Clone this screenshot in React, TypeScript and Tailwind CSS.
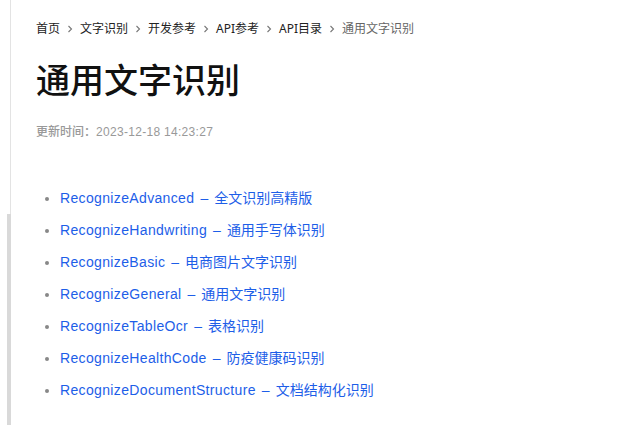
const crumbs = ['首页', '文字识别', '开发参考', 'API参考', 'API目录'];

const items = [
  ['RecognizeAdvanced', '全文识别高精版'],
  ['RecognizeHandwriting', '通用手写体识别'],
  ['RecognizeBasic', '电商图片文字识别'],
  ['RecognizeGeneral', '通用文字识别'],
  ['RecognizeTableOcr', '表格识别'],
  ['RecognizeHealthCode', '防疫健康码识别'],
  ['RecognizeDocumentStructure', '文档结构化识别'],
];

function Chevron() {
  return (
    <svg width="12" height="12" viewBox="0 0 12 12" className="mx-[4px] text-[#777]">
      <path d="M4.5 3 L7.5 6 L4.5 9" fill="none" stroke="currentColor" strokeWidth="1.1" />
    </svg>
  );
}

export default function App() {
  return (
    <div
      className="w-[619px] h-[425px] bg-white flex overflow-hidden"
      style={{ fontFamily: '"Liberation Sans", "Noto Sans CJK SC", sans-serif' }}
    >
      {/* left rail */}
      <div className="w-[11px] flex-shrink-0 flex flex-col items-end">
        <div className="w-px h-[214px] bg-[#e3e3e3]" />
        <div className="w-[4px] flex-1 bg-[#d9d9d9]" />
      </div>

      <main className="flex-1 pl-[25px] pt-[20px]">
        {/* breadcrumb */}
        <nav
          className="flex items-center h-[18px] text-[12px] text-[#222]"
          style={{ fontFamily: '"Noto Sans", "Noto Sans CJK SC", sans-serif' }}
        >
          {crumbs.map((c) => (
            <span key={c} className="flex items-center">
              <span>{c}</span>
              <Chevron />
            </span>
          ))}
          <span className="text-[#666]">通用文字识别</span>
        </nav>

        <h1 className="mt-[21px] text-[34px] leading-[44px] font-medium text-[#111]">
          通用文字识别
        </h1>

        <p className="mt-[20px] text-[12px] leading-[18px] font-medium text-[#999]">
          更新时间：<span className="tracking-[0.3px]">2023-12-18 14:23:27</span>
        </p>

        <ul className="mt-[41px] list-disc pl-[24px] marker:text-[#888]">
          {items.map(([name, desc]) => (
            <li key={name} className="text-[14px] leading-[32px] text-[#1d5ee8]">
              <span className="tracking-[0.35px]">{name}</span>
              <span className="mx-[6px]">–</span>
              {desc}
            </li>
          ))}
        </ul>
      </main>
    </div>
  );
}
